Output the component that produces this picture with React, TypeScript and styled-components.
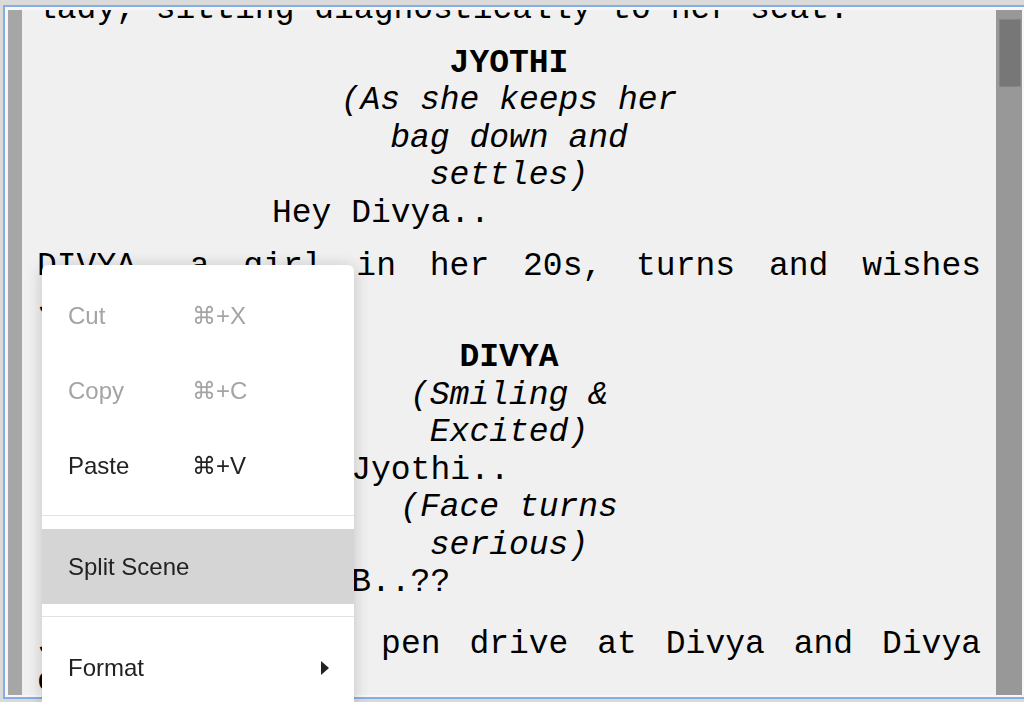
import React from "react";
import styled, { createGlobalStyle } from "styled-components";

type Kind = "action" | "character" | "paren" | "dialogue";

interface ScriptLine {
  kind: Kind;
  text: string;
  space?: number;
}

interface MenuEntry {
  label?: string;
  shortcut?: string;
  disabled?: boolean;
  active?: boolean;
  submenu?: boolean;
  divider?: boolean;
}

const scriptLines: ScriptLine[] = [
  { kind: "action", text: "lady, sitting diagnostically to her seat." },
  { kind: "character", text: "JYOTHI", space: 16 },
  { kind: "paren", text: "(As she keeps her bag down and settles)" },
  { kind: "dialogue", text: "Hey Divya.." },
  { kind: "action", text: "DIVYA, a girl in her 20s, turns and wishes Jyothi.", space: 16 },
  { kind: "character", text: "DIVYA", space: 16 },
  { kind: "paren", text: "(Smiling & Excited)" },
  { kind: "dialogue", text: "Hey Jyothi.." },
  { kind: "paren", text: "(Face turns serious)" },
  { kind: "dialogue", text: "Hey B..??" },
  { kind: "action", text: "Jyothi throws a pen drive at Divya and Divya catches it.", space: 24 },
];

const menuEntries: MenuEntry[] = [
  { label: "Cut", shortcut: "⌘+X", disabled: true },
  { label: "Copy", shortcut: "⌘+C", disabled: true },
  { label: "Paste", shortcut: "⌘+V" },
  { divider: true },
  { label: "Split Scene", active: true },
  { divider: true },
  { label: "Format", submenu: true },
];

const GlobalStyle = createGlobalStyle`
  html, body {
    margin: 0;
    padding: 0;
    height: 100%;
    overflow: hidden;
    background: #dadada;
  }
  * {
    box-sizing: border-box;
  }
`;

const Frame = styled.div`
  margin: 5px 0 0 3px;
  height: 694px;
  border: 2px solid #85ade6;
  border-right: none;
  background: #f7f7f7;
  padding: 3px 2px 2px 3px;
  display: flex;
`;

const Gutter = styled.div`
  width: 14px;
  background: #a6a6a6;
`;

const Page = styled.div`
  flex: 1;
  background: #f0f0f0;
  overflow: hidden;
  padding: 0 15px;
`;

const ScriptColumn = styled.div`
  margin-top: -19px;
  font-family: "Liberation Mono", "DejaVu Sans Mono", monospace;
  font-size: 33px;
  line-height: 37.5px;
  color: #000;
`;

const Action = styled.p<{ $space: number }>`
  margin: ${(p) => p.$space}px 0 0 0;
  text-align: justify;
`;

const Character = styled.p<{ $space: number }>`
  margin: ${(p) => p.$space}px 0 0 0;
  text-align: center;
  font-weight: bold;
`;

const Paren = styled.p<{ $space: number }>`
  margin: ${(p) => p.$space}px auto 0 auto;
  width: 350px;
  text-align: center;
  font-style: italic;
`;

const Dialogue = styled.p<{ $space: number }>`
  margin: ${(p) => p.$space}px 0 0 235px;
  width: 470px;
`;

const Scrollbar = styled.div`
  width: 26px;
  background: #989898;
  padding: 9px 1px 0 3px;
`;

const Thumb = styled.div`
  height: 68px;
  background: #777;
  border: 1px solid #858585;
`;

const Menu = styled.div`
  position: fixed;
  left: 42px;
  top: 265px;
  width: 312px;
  padding-top: 13px;
  background: #fff;
  border-radius: 6px 6px 0 0;
  box-shadow: 0 2px 16px rgba(0, 0, 0, 0.2);
  font-family: "Liberation Sans", Arial, sans-serif;
  font-size: 24px;
`;

const Item = styled.div<{ $disabled?: boolean; $active?: boolean }>`
  height: 75px;
  display: grid;
  grid-template-columns: 124px 1fr auto;
  align-items: center;
  padding: 0 25px 0 26px;
  color: ${(p) => (p.$disabled ? "#a4a4a4" : "#222")};
  background: ${(p) => (p.$active ? "#d5d5d5" : "transparent")};
`;

const Shortcut = styled.span`
  font-family: "Liberation Sans", "DejaVu Sans", sans-serif;
`;

const Divider = styled.div`
  height: 1px;
  margin: 12px 0 13px 0;
  background: #e2e2e2;
`;

const Arrow = styled.span`
  width: 0;
  height: 0;
  border-top: 7px solid transparent;
  border-bottom: 7px solid transparent;
  border-left: 8px solid #222;
`;

const renderLine = (line: ScriptLine, i: number) => {
  const space = line.space ?? 0;
  switch (line.kind) {
    case "character":
      return <Character key={i} $space={space}>{line.text}</Character>;
    case "paren":
      return <Paren key={i} $space={space}>{line.text}</Paren>;
    case "dialogue":
      return <Dialogue key={i} $space={space}>{line.text}</Dialogue>;
    default:
      return <Action key={i} $space={space}>{line.text}</Action>;
  }
};

const App: React.FunctionComponent<{}> = () => {
  return (
    <>
      <GlobalStyle />
      <Frame>
        <Gutter />
        <Page>
          <ScriptColumn>{scriptLines.map(renderLine)}</ScriptColumn>
        </Page>
        <Scrollbar>
          <Thumb />
        </Scrollbar>
      </Frame>
      <Menu>
        {menuEntries.map((m, i) =>
          m.divider ? (
            <Divider key={i} />
          ) : (
            <Item key={i} $disabled={m.disabled} $active={m.active}>
              <span>{m.label}</span>
              <Shortcut>{m.shortcut}</Shortcut>
              {m.submenu ? <Arrow /> : <span />}
            </Item>
          )
        )}
      </Menu>
    </>
  );
};

export default App;
